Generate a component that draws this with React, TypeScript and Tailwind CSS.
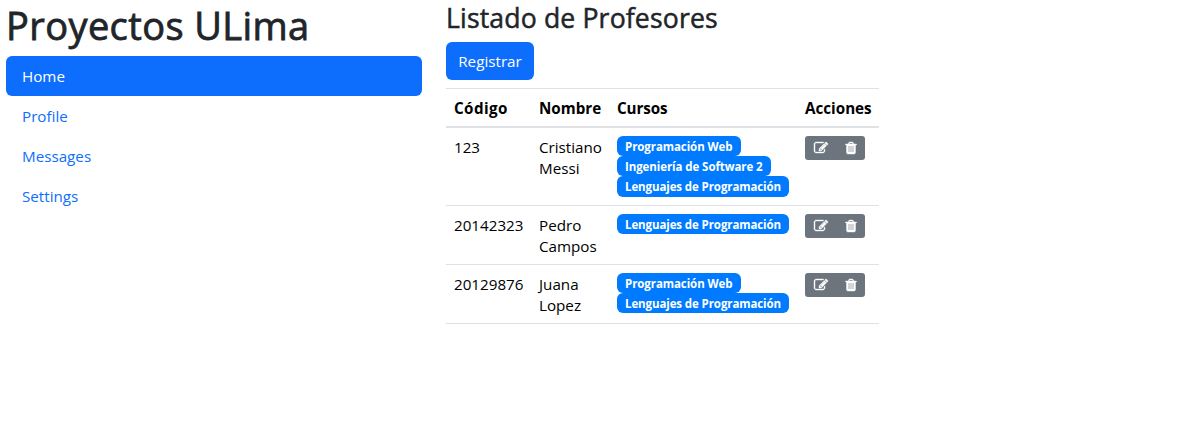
import React from "react";

const EDIT_PATH =
  "M888 1184l116-116-152-152-116 116v56h96v96h56zm440-720q-16-16-33 1l-350 350q-17 17-1 33t33-1l350-350q17-17 1-33zm80 594v190q0 119-84.5 203.5t-203.5 84.5h-832q-119 0-203.5-84.5t-84.5-203.5v-832q0-119 84.5-203.5t203.5-84.5h832q63 0 117 25 15 7 18 23 3 17-9 29l-49 49q-14 14-32 8-23-6-45-6h-832q-66 0-113 47t-47 113v832q0 66 47 113t113 47h832q66 0 113-47t47-113v-126q0-13 9-22l64-64q15-15 35-7t20 29zm-96-738l288 288-672 672h-288v-288zm444 132l-92 92-288-288 92-92q28-28 68-28t68 28l152 152q28 28 28 68t-28 68z";

const TRASH_PATH =
  "M704 1376v-704q0-14-9-23t-23-9h-64q-14 0-23 9t-9 23v704q0 14 9 23t23 9h64q14 0 23-9t9-23zm256 0v-704q0-14-9-23t-23-9h-64q-14 0-23 9t-9 23v704q0 14 9 23t23 9h64q14 0 23-9t9-23zm256 0v-704q0-14-9-23t-23-9h-64q-14 0-23 9t-9 23v704q0 14 9 23t23 9h64q14 0 23-9t9-23zm-544-992h448l-48-117q-7-9-17-11h-317q-10 2-17 11zm928 32v64q0 14-9 23t-23 9h-96v948q0 83-47 143.5t-113 60.5h-832q-66 0-113-58.5t-47-141.5v-952h-96q-14 0-23-9t-9-23v-64q0-14 9-23t23-9h309l70-167q15-37 54-63t79-26h320q40 0 79 26t54 63l70 167h309q14 0 23 9t9 23z";

const COLUMNS = "grid grid-cols-[85px_78px_188px_82px]";

type Course = { name: string; style: string };

const WEB: Course = { name: "Programación Web", style: "w-[124px] tracking-[-0.08px]" };
const SOFTWARE: Course = { name: "Ingeniería de Software 2", style: "w-[154px] tracking-[-0.08px]" };
const LANGUAGES: Course = { name: "Lenguajes de Programación", style: "w-[172px] tracking-[-0.1px]" };

const teachers = [
  { code: "123", name: "Cristiano Messi", courses: [WEB, SOFTWARE, LANGUAGES], height: "h-[78px]" },
  { code: "20142323", name: "Pedro Campos", courses: [LANGUAGES], height: "h-[59px]" },
  { code: "20129876", name: "Juana Lopez", courses: [WEB, LANGUAGES], height: "h-[59px]" },
];

function Icon({ path }: { path: string }) {
  return (
    <svg
      viewBox="0 0 1792 1792"
      className="size-[14px] overflow-visible fill-white stroke-white stroke-[50px]"
      aria-hidden="true"
    >
      <path d={path} />
    </svg>
  );
}

function Sidebar() {
  return (
    <aside className="w-[416px]">
      <h1 className="h-14 whitespace-nowrap pt-px text-[38px] font-medium leading-[48px] tracking-[0.4px] text-[#212529] [-webkit-text-stroke:0.8px_#212529]">
        Proyectos ULima
      </h1>
      <nav className="flex flex-col text-[15.2px] text-[#0d6efd]">
        {["Home", "Profile", "Messages", "Settings"].map((label, i) => (
          <a
            key={label}
            href="#"
            className={
              i === 0
                ? "h-10 rounded-md bg-[#0d6efd] px-4 leading-10 text-white"
                : "h-10 px-4 leading-10"
            }
          >
            {label}
          </a>
        ))}
      </nav>
    </aside>
  );
}

function TeacherTable() {
  return (
    <div className="mt-2 border-t border-[#dee2e6] text-[15.2px] leading-[21px] text-black">
      <div className={`${COLUMNS} h-[39px] border-b-2 border-[#dee2e6] font-bold leading-[38px]`}>
        <span className="px-2 tracking-[0.4px]">Código</span>
        <span className="px-2">Nombre</span>
        <span className="px-2 tracking-[-0.1px]">Cursos</span>
        <span className="px-2">Acciones</span>
      </div>
      {teachers.map((t) => (
        <div key={t.code} className={`${COLUMNS} ${t.height} border-b border-[#dee2e6]`}>
          <span className="px-2 pt-[9px]">{t.code}</span>
          <span className="px-2 pt-[9px]">{t.name}</span>
          <div className="flex flex-col px-2 pt-2">
            {t.courses.map((c) => (
              <span
                key={c.name}
                className={`${c.style} h-[20.2px] whitespace-nowrap rounded-md bg-[#007bff] px-2 text-[11.5px] font-bold leading-[21px] text-white`}
              >
                {c.name}
              </span>
            ))}
          </div>
          <div className="px-2 pt-2">
            <div className="flex h-6 w-[60px] items-center justify-between rounded-[3px] bg-[#6c757d] pl-[9px] pr-[7px]">
              <button type="button" aria-label="Editar">
                <Icon path={EDIT_PATH} />
              </button>
              <button type="button" aria-label="Eliminar">
                <Icon path={TRASH_PATH} />
              </button>
            </div>
          </div>
        </div>
      ))}
    </div>
  );
}

export default function App() {
  return (
    <div className="flex h-[424px] gap-6 overflow-hidden bg-white pl-1.5 font-['Open_Sans','Noto_Sans',sans-serif]">
      <Sidebar />
      <main className="w-[433px]">
        <h3 className="h-[42px] whitespace-nowrap pt-px text-[26.6px] font-medium leading-[34px] tracking-[0.15px] text-[#212529] [-webkit-text-stroke:0.5px_#212529]">
          Listado de Profesores
        </h3>
        <button
          type="button"
          className="block h-[38px] w-[88px] rounded-md bg-[#0d6efd] text-center text-[15.2px] leading-[38px] text-white"
        >
          Registrar
        </button>
        <TeacherTable />
      </main>
    </div>
  );
}
